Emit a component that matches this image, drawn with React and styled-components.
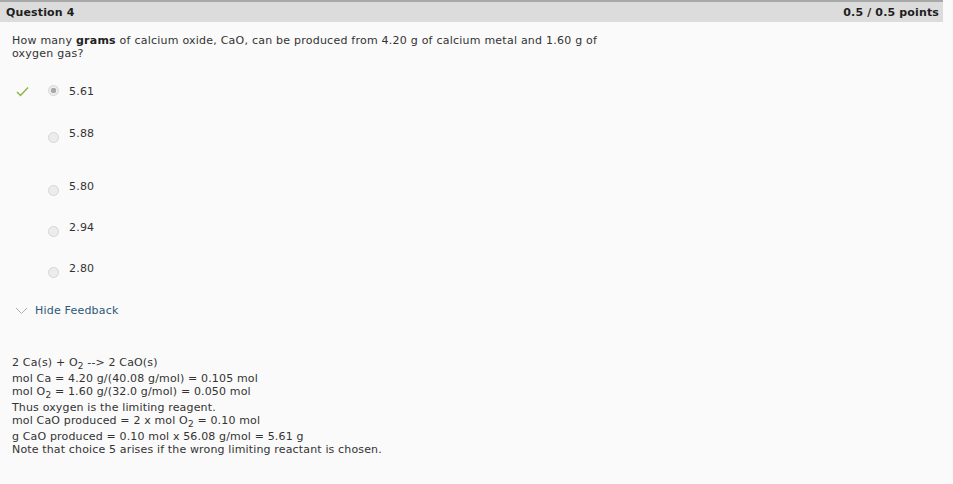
import styled, { createGlobalStyle } from "styled-components";

const GlobalStyle = createGlobalStyle`
  html, body {
    margin: 0;
    padding: 0;
    background: #fafafa;
  }
  body {
    font-family: "DejaVu Sans", Verdana, sans-serif;
    color: #333;
  }
`;

const options = [
  { value: "5.61", selected: true, correct: true, gap: 0 },
  { value: "5.88", gap: 42 },
  { value: "5.80", gap: 53 },
  { value: "2.94", gap: 41 },
  { value: "2.80", gap: 41 },
];

const App = () => {
  return (
    <Page>
      <GlobalStyle />
      <Header>
        <HeaderTitle>Question 4</HeaderTitle>
        <HeaderTitle>0.5 / 0.5 points</HeaderTitle>
      </Header>

      <QuestionText>
        How many <b>grams</b> of calcium oxide, CaO, can be produced from 4.20 g
        of calcium metal and 1.60 g of
        <br />
        oxygen gas?
      </QuestionText>

      <OptionList>
        {options.map((o) => (
          <OptionRow key={o.value} $gap={o.gap}>
            <Mark>
              {o.correct && (
                <svg width="13" height="11" viewBox="0 0 13 11">
                  <path
                    d="M1 6 L4.5 9.5 L12 1.5"
                    fill="none"
                    stroke="#8fb548"
                    strokeWidth="1.5"
                  />
                </svg>
              )}
            </Mark>
            <Radio $selected={o.selected} />
            <OptionLabel>{o.value}</OptionLabel>
          </OptionRow>
        ))}
      </OptionList>

      <FeedbackToggle>
        <svg width="13" height="8" viewBox="0 0 13 8">
          <path d="M1 1 L6.5 6.5 L12 1" fill="none" stroke="#b0b0b0" strokeWidth="1" />
        </svg>
        <span>Hide Feedback</span>
      </FeedbackToggle>

      <Feedback>
        <Line $sub>
          2 Ca(s) + O<sub>2</sub> --&gt; 2 CaO(s)
        </Line>
        <Line>mol Ca = 4.20 g/(40.08 g/mol) = 0.105 mol</Line>
        <Line $sub>
          mol O<sub>2</sub> = 1.60 g/(32.0 g/mol) = 0.050 mol
        </Line>
        <Line>Thus oxygen is the limiting reagent.</Line>
        <Line $sub>
          mol CaO produced = 2 x mol O<sub>2</sub> = 0.10 mol
        </Line>
        <Line>g CaO produced = 0.10 mol x 56.08 g/mol = 5.61 g</Line>
        <Line>Note that choice 5 arises if the wrong limiting reactant is chosen.</Line>
      </Feedback>
    </Page>
  );
};

export default App;

const Page = styled.div`
  width: 953px;
  height: 484px;
  overflow: hidden;
`;

const Header = styled.div`
  width: 943px;
  height: 22px;
  box-sizing: border-box;
  background: #dcdcdc;
  border-top: 2px solid #a8a8a8;
  display: flex;
  justify-content: space-between;
  align-items: center;
  padding: 0 4px 0 6px;
`;

const HeaderTitle = styled.div`
  font-size: 11px;
  font-weight: bold;
  color: #1e1e1e;
  letter-spacing: 0.15px;
`;

const QuestionText = styled.div`
  margin: 12px 0 0 12px;
  font-size: 11px;
  line-height: 13px;
  letter-spacing: 0.23px;
  color: #333;

  b {
    color: #222;
  }
`;

const OptionList = styled.div`
  margin-top: 24px;
  display: flex;
  flex-direction: column;
`;

const OptionRow = styled.div`
  display: flex;
  align-items: center;
  height: 14px;
  margin-top: ${(p) => (p.$gap ? p.$gap - 14 : 0)}px;
`;

const Mark = styled.div`
  width: 17px;
  margin-left: 16px;
  display: flex;
  align-items: center;
`;

const Radio = styled.span`
  width: 11px;
  height: 11px;
  margin-left: 15px;
  border-radius: 50%;
  box-sizing: border-box;
  border: 1px solid #d6d6d6;
  background: ${(p) =>
    p.$selected
      ? "radial-gradient(circle, #a8a8a8 0 2.5px, #ececec 3px)"
      : "#ececec"};
  position: relative;
  top: ${(p) => (p.$selected ? -1 : 4)}px;
`;

const OptionLabel = styled.span`
  margin-left: 10px;
  font-size: 11px;
  letter-spacing: 0.2px;
  color: #333;
`;

const FeedbackToggle = styled.div`
  margin: 29px 0 0 15px;
  display: flex;
  align-items: center;
  gap: 7px;
  font-size: 11px;
  letter-spacing: 0.2px;
  color: #2c5878;
`;

const Feedback = styled.div`
  margin: 39px 0 0 12px;
  font-size: 11px;
  color: #333;
  line-height: 13px;
  letter-spacing: 0.15px;

  sub {
    font-size: 9px;
    line-height: 0;
    vertical-align: -3px;
  }
`;

const Line = styled.div`
  padding-bottom: ${(p) => (p.$sub ? 3 : 0)}px;
`;
